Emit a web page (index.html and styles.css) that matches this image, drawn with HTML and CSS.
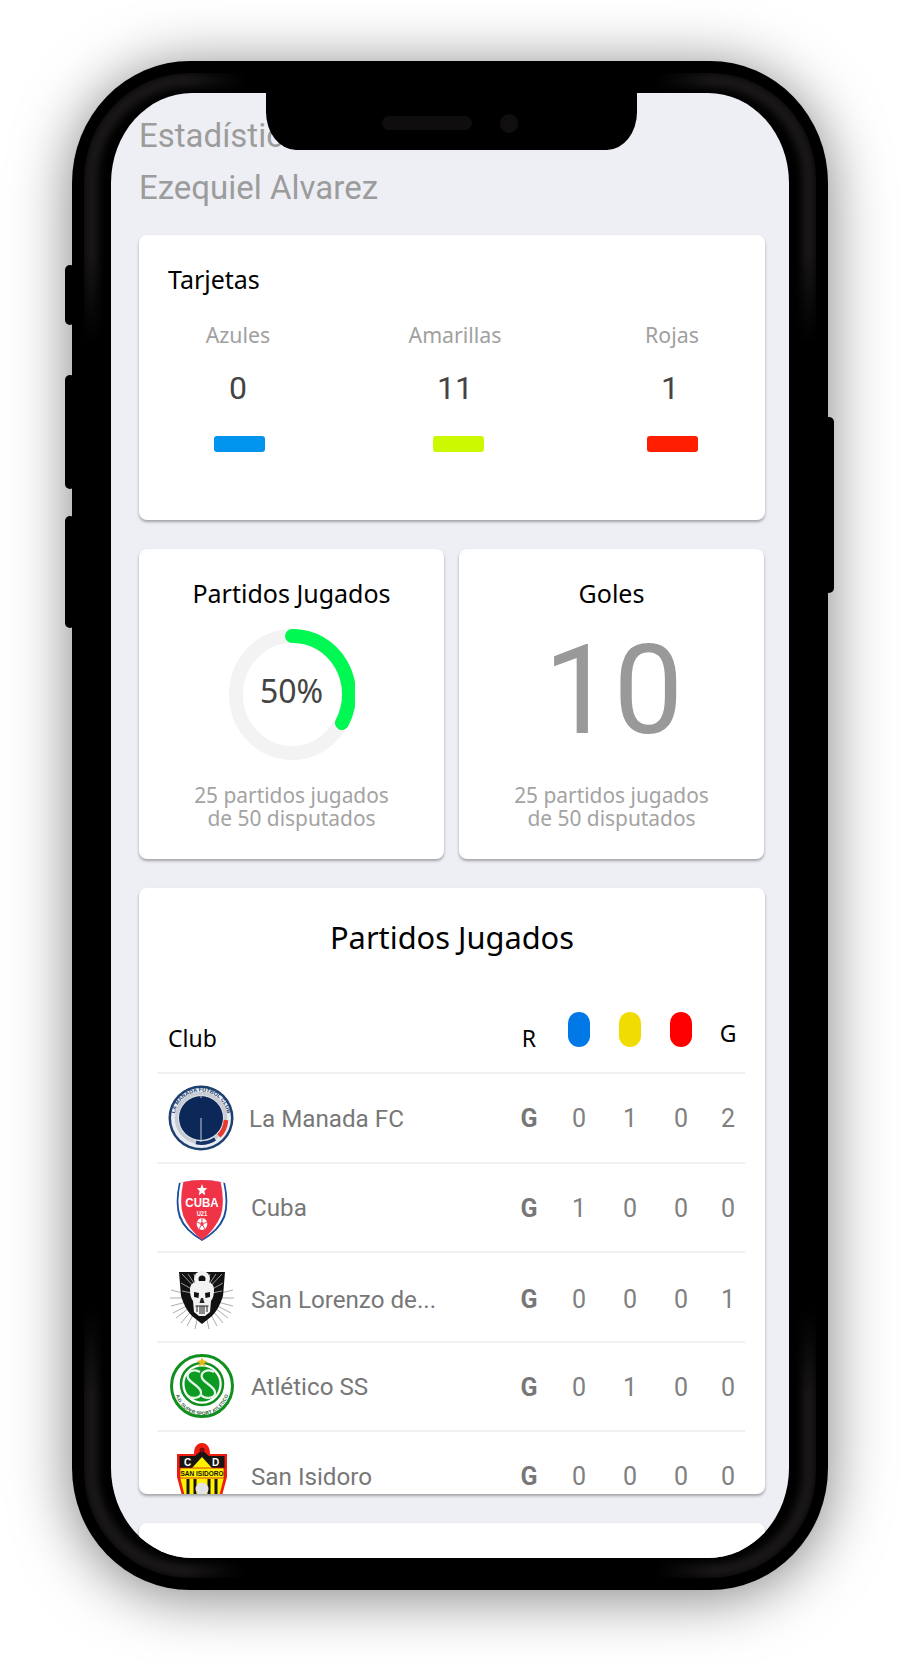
FILE: index.html
```html
<!DOCTYPE html>
<html lang="es">
<head>
<meta charset="utf-8">
<title>Estadísticas</title>
<link rel="stylesheet" href="styles.css">
</head>
<body>
<div class="phone">
  <span class="side-btn btn-a"></span>
  <span class="side-btn btn-b"></span>
  <span class="side-btn btn-c"></span>
  <span class="side-btn btn-d"></span>
  <div class="notch">
    <span class="speaker"></span>
    <span class="camera"></span>
  </div>
  <main class="screen">
    <header class="page-head">
      <h1 class="page-title">Estadísticas</h1>
      <h2 class="page-title">Ezequiel Alvarez</h2>
    </header>

    <section class="card cards-panel">
      <h3 class="card-title">Tarjetas</h3>
      <div class="tally">
        <div class="tally-col">
          <span class="tally-label">Azules</span>
          <span class="tally-num">0</span>
          <span class="chip chip-blue"></span>
        </div>
        <div class="tally-col">
          <span class="tally-label">Amarillas</span>
          <span class="tally-num">11</span>
          <span class="chip chip-yellow"></span>
        </div>
        <div class="tally-col">
          <span class="tally-label">Rojas</span>
          <span class="tally-num tally-num-last">1</span>
          <span class="chip chip-red"></span>
        </div>
      </div>
    </section>

    <div class="stat-row">
      <section class="card stat">
        <h3 class="card-title stat-title">Partidos Jugados</h3>
        <div class="stat-main">
          <svg class="ring" viewBox="0 0 126 131" aria-hidden="true">
            <ellipse cx="63" cy="65.5" rx="56" ry="58.5" fill="none" stroke="#f3f3f3" stroke-width="14"/>
            <path d="M63 7A56 58.5 0 0 1 113 94" fill="none" stroke="#00f852" stroke-width="14" stroke-linecap="round"/>
          </svg>
          <span class="ring-label">50%</span>
        </div>
        <p class="stat-note">25 partidos jugados<br>de 50 disputados</p>
      </section>
      <section class="card stat">
        <h3 class="card-title stat-title">Goles</h3>
        <div class="stat-main">
          <span class="big-num">10</span>
        </div>
        <p class="stat-note">25 partidos jugados<br>de 50 disputados</p>
      </section>
    </div>

    <section class="card matches">
      <h3 class="matches-title">Partidos Jugados</h3>
      <div class="mrow mhead">
        <span class="h-club">Club</span>
        <span class="h-r">R</span>
        <span class="pill pill-blue"></span>
        <span class="pill pill-yellow"></span>
        <span class="pill pill-red"></span>
        <span class="h-g">G</span>
      </div>

      <div class="mrow">
        <div class="club club-wide">
          <svg class="logo logo-wide" viewBox="0 0 66 66" aria-hidden="true">
            <circle cx="33" cy="33" r="32.5" fill="#1b3f6f"/>
            <circle cx="33" cy="33" r="30" fill="#e9edf3"/>
            <path id="mn" d="M6.500 33A26.500 26.500 0 0 1 59.500 33" fill="none"/>
            <text class="t-manada"><textPath href="#mn" startOffset="50%" text-anchor="middle">LA MANADA FUTBOL CLUB</textPath></text>
            <circle cx="33" cy="33" r="24.500" fill="none" stroke="#c9ccd2" stroke-width="3.500"/>
            <path d="M58 35A25 25 0 0 1 51 51" fill="none" stroke="#e8392f" stroke-width="4.500"/>
            <path d="M47 54A25 25 0 0 1 28 57.500" fill="none" stroke="#123268" stroke-width="3.500"/>
            <circle cx="33" cy="33" r="22" fill="#0c2859"/>
            <path d="M33 8V13M33 33V57" stroke="#c6ccd6" stroke-width="1"/>
          </svg>
          <span class="name">La Manada FC</span>
        </div>
        <b class="res">G</b><span class="val">0</span><span class="val">1</span><span class="val">0</span><span class="val last">2</span>
      </div>

      <div class="mrow">
        <div class="club">
          <svg class="logo logo-low" viewBox="-4 0 72 62" preserveAspectRatio="none" aria-hidden="true">
            <path d="M6 4Q32-2 58 4Q63 24 58 38Q52 52 32 62Q12 52 6 38Q1 24 6 4Z" fill="#1c4ea0"/>
            <path d="M8 3.500Q32-1 56 3.500Q61 24 56 37Q50 51 32 60Q14 51 8 37Q3 24 8 3.500Z" fill="#fff"/>
            <path d="M11 3Q32-1 53 3Q58 24 53 37Q47 50 32 61Q17 50 11 37Q6 24 11 3Z" fill="#f03347"/>
            <path d="M32 5l1.600 4 4.300.300-3.300 2.700 1.100 4.200-3.700-2.300-3.700 2.300 1.100-4.200-3.300-2.700 4.300-.300z" fill="#fff"/>
            <text class="t-cuba" x="32" y="28" text-anchor="middle">CUBA</text>
            <text class="t-u21" x="32" y="37" text-anchor="middle">U21</text>
            <circle cx="32" cy="45" r="6" fill="#fff"/>
            <circle cx="32" cy="45" r="2" fill="#f03347"/>
            <path d="M32 39V43M26.500 43l3.500 1.500M37.500 43l-3.500 1.500M28.500 50l2.500-3.500M35.500 50l-2.500-3.500" stroke="#f03347" stroke-width="1"/>
          </svg>
          <span class="name">Cuba</span>
        </div>
        <b class="res">G</b><span class="val">1</span><span class="val">0</span><span class="val">0</span><span class="val last">0</span>
      </div>

      <div class="mrow mrow-low">
        <div class="club">
          <svg class="logo logo-low" viewBox="0 0 64 62" aria-hidden="true">
            <g stroke="#8a8a8a" stroke-width=".7">
              <path d="M32 29L0 29M32 29L1 21M32 29L1 37M32 29L3 44M32 29L6 49M32 29L11 54M32 29L17 57M32 29L25 60M32 29L39 60M32 29L47 57M32 29L53 54M32 29L58 49M32 29L61 44M32 29L63 21M32 29L63 37M32 29L64 29"/>
            </g>
            <path d="M9 3H55L53 27Q49 40 42 47L32 55L22 47Q15 40 11 27Z" fill="#111"/>
            <path d="M32 26L12 5M32 26L18 5M32 26L24 5M32 26L40 5M32 26L46 5M32 26L52 5M32 26L11 14M32 26L53 14M32 26L12 22M32 26L52 22" stroke="#bbb" stroke-width=".8"/>
            <circle cx="32" cy="10" r="8" fill="#f2f2f2"/>
            <circle cx="32" cy="10" r="3.500" fill="#111"/>
            <path d="M20 20C20 14 26 12 32 12S44 14 44 20C44 26 43 29 41 32L40 43L35 47H29L24 43L23 32C21 29 20 26 20 20Z" fill="#f2f2f2"/>
            <path d="M24 23L29 24L28.500 29L24 28ZM40 23L35 24L35.500 29L40 28Z" fill="#111"/>
            <path d="M31 29L29.500 34H34.500L33 29Z" fill="#222"/>
            <path d="M27 37V43M30 37V45M32 37V45M34 37V45M37 37V43M25.500 37H38.500" stroke="#222" stroke-width="1"/>
          </svg>
          <span class="name">San Lorenzo de...</span>
        </div>
        <b class="res">G</b><span class="val">0</span><span class="val">0</span><span class="val">0</span><span class="val last">1</span>
      </div>

      <div class="mrow">
        <div class="club">
          <svg class="logo logo-round" viewBox="0 0 64 64" aria-hidden="true">
            <circle cx="32" cy="32" r="30.500" fill="#fff" stroke="#0f8f1e" stroke-width="3"/>
            <path id="at" d="M5 34A27 27 0 0 0 59 34" fill="none"/>
            <text class="t-atl"><textPath href="#at" startOffset="50%" text-anchor="middle">A.D. SUPER SPORT ATLETICO</textPath></text>
            <circle cx="32" cy="30" r="21" fill="#fff" stroke="#0f8f1e" stroke-width="2.500"/>
            <circle cx="32" cy="30" r="17.500" fill="#0c9a22"/>
            <path d="M30 18C24 14 16 18 18 24C20 29 30 32 31 38C32 44 22 46 17 41" fill="none" stroke="#e3f5e5" stroke-width="2.200"/>
            <path d="M44 18C38 14 30 18 32 24C34 29 44 32 45 38C46 44 36 46 31 41" fill="none" stroke="#e3f5e5" stroke-width="2.200"/>
            <path d="M32 3l1.500 3.500 3.700.300-2.800 2.400.900 3.600-3.300-2-3.300 2 .900-3.600-2.800-2.400 3.700-.300z" fill="#e9b81e"/>
          </svg>
          <span class="name">Atlético SS</span>
        </div>
        <b class="res">G</b><span class="val">0</span><span class="val">1</span><span class="val">0</span><span class="val last">0</span>
      </div>

      <div class="mrow">
        <div class="club">
          <svg class="logo logo-tall" viewBox="0 0 64 66" aria-hidden="true">
            <path d="M7 11H24C24 4 27 0 32 0S40 4 40 11H57V34L50 60L32 66L14 60L7 34Z" fill="#f01c10"/>
            <path d="M9.500 13H25L32 7L39 13H54.500V25H9.500Z" fill="#191514"/>
            <circle cx="32" cy="7" r="2.500" fill="#7a0d08"/>
            <path d="M10 25H22L32 14L42 25H54V34L48 58L32 64L16 58L10 34Z" fill="#fff200"/>
            <rect x="10" y="25" width="44" height="10" fill="#fff200" stroke="#c81a10" stroke-width=".8"/>
            <text class="t-cd" x="14" y="23">C</text>
            <text class="t-cd" x="42" y="23">D</text>
            <text class="t-si" x="32" y="33" text-anchor="middle">SAN ISIDORO</text>
            <path d="M18 36V58M25 36V62M39 36V62M46 36V58" stroke="#161311" stroke-width="3"/>
            <circle cx="32" cy="46" r="6.500" fill="#e4e4e4"/>
          </svg>
          <span class="name">San Isidoro</span>
        </div>
        <b class="res">G</b><span class="val">0</span><span class="val">0</span><span class="val">0</span><span class="val last">0</span>
      </div>
    </section>

    <section class="card next-card"></section>
  </main>
</div>
</body>
</html>
```

FILE: styles.css
```css
* { box-sizing: border-box; }

html, body {
  margin: 0;
  height: 1665px;
  overflow: hidden;
  background: #fff;
}

body {
  padding: 61px 72px 0;
  font-family: "Roboto", "Liberation Sans", sans-serif;
}

.phone {
  position: relative;
  width: 756px;
  height: 1529px;
  padding: 32px 39px 32px;
  background: #000;
  border-radius: 118px / 122px;
  box-shadow: 0 6px 60px rgba(0, 0, 0, .5);
}

.phone::before {
  content: "";
  position: absolute;
  inset: 12px;
  border: 14px solid #1b1819;
  border-radius: 106px;
  filter: blur(4px);
  -webkit-mask-image: linear-gradient(to bottom, #000 0 12%, transparent 18% 82%, #000 88%), linear-gradient(to right, #000 0 14%, transparent 22% 78%, #000 86%);
  -webkit-mask-composite: source-in;
  mask-image: linear-gradient(to bottom, #000 0 12%, transparent 18% 82%, #000 88%), linear-gradient(to right, #000 0 14%, transparent 22% 78%, #000 86%);
  mask-composite: intersect;
}

.side-btn {
  position: absolute;
  width: 10px;
  background: #000;
  border-radius: 5px;
}
.btn-a { left: -7px; top: 204px; height: 60px; }
.btn-b { left: -7px; top: 314px; height: 114px; }
.btn-c { left: -7px; top: 455px; height: 112px; }
.btn-d { right: -6px; top: 356px; height: 176px; }

.notch {
  position: absolute;
  z-index: 3;
  left: 194px;
  top: 30px;
  width: 371px;
  height: 59px;
  background: #000;
  border-radius: 0 0 30px 30px / 0 0 38px 38px;
}
.speaker {
  position: absolute;
  left: 116px;
  top: 25px;
  width: 90px;
  height: 14px;
  border-radius: 7px;
  background: #0f0d0e;
}
.camera {
  position: absolute;
  left: 234px;
  top: 23px;
  width: 18px;
  height: 19px;
  border-radius: 50%;
  background: #100e0f;
}

.screen {
  position: relative;
  height: 1465px;
  padding: 17px 24px 0 28px;
  background: #eeeff4;
  border-radius: 81px / 90px;
  overflow: hidden;
}

.page-head { margin-bottom: 21px; }

.page-title {
  margin: 0;
  font-size: 33px;
  line-height: 52px;
  font-weight: 400;
  color: #9c9c9c;
  white-space: nowrap;
}

.card {
  background: #fff;
  border-radius: 8px;
  box-shadow: 0 2px 3px rgba(0, 0, 0, .32);
}

.card-title {
  margin: 0;
  font-family: "Noto Sans", sans-serif;
  font-size: 25px;
  line-height: 34px;
  font-weight: 400;
  color: #000;
}

.cards-panel {
  height: 285px;
  padding: 27px 0 0 29px;
}

.tally {
  display: flex;
  justify-content: space-between;
  margin-top: 24px;
  padding: 0 43px 0 20px;
}
.tally-col {
  display: flex;
  flex-direction: column;
  align-items: center;
  width: 100px;
}
.tally-label {
  font-family: "Noto Sans", sans-serif;
  font-size: 21.300px;
  line-height: 30px;
  color: #a0a0a0;
}
.tally-num {
  margin-top: 18px;
  font-size: 32px;
  line-height: 40px;
  color: #444;
}
.tally-num-last { margin-right: 4px; }
.chip {
  width: 51px;
  height: 16px;
  margin-top: 28px;
  border-radius: 3px;
}
.chip-blue { margin-left: 3px; background: #0094ee; }
.chip-yellow { margin-left: 7px; background: #ccf900; }
.chip-red { background: #ff1e00; }

.stat-row {
  display: grid;
  grid-template-columns: 305px 305px;
  gap: 15px;
  margin-top: 29px;
}
.stat {
  height: 310px;
  padding-top: 26px;
  text-align: center;
}
.stat-title { line-height: 36px; }
.stat-main {
  position: relative;
  display: flex;
  justify-content: center;
  align-items: center;
  height: 131px;
  margin-top: 18px;
}
.ring {
  width: 126px;
  height: 131px;
}
.ring-label {
  position: absolute;
  left: 0;
  right: 0;
  top: 45px;
  font-family: "Noto Sans", sans-serif;
  font-size: 32px;
  line-height: 34px;
  color: #444;
}
.big-num {
  font-size: 124px;
  line-height: 131px;
  color: #999;
  transform: translate(2px, -4px);
}
.stat-note {
  margin: 24px 0 0;
  font-family: "Noto Sans", sans-serif;
  font-size: 20.900px;
  line-height: 23px;
  color: #a3a3a3;
}

.matches {
  height: 606px;
  margin-top: 29px;
  overflow: hidden;
}
.matches-title {
  margin: 0;
  padding-top: 28px;
  font-family: "Noto Sans", sans-serif;
  font-size: 30.800px;
  line-height: 42px;
  font-weight: 400;
  text-align: center;
  color: #000;
}

.mrow {
  display: grid;
  grid-template-columns: 347px 50px 50px 52px 50px 39px;
  align-items: center;
  height: 89.500px;
  margin: 0 20px 0 18px;
  border-bottom: 2px solid #f0f0f0;
  text-align: center;
}
.mhead {
  align-items: start;
  height: 72px;
  margin-top: 44px;
  font-family: "Noto Sans", sans-serif;
  font-size: 23px;
  line-height: 24px;
  color: #000;
}
.h-club { margin: 24px 0 0 11px; text-align: left; }
.h-r { margin-top: 24px; }
.h-g { margin: 19px 0 0 5px; }
.pill {
  justify-self: center;
  width: 22px;
  height: 35px;
  margin-top: 10px;
  border-radius: 11px;
}
.pill-blue { background: #0078e6; }
.pill-yellow { background: #f0dc00; }
.pill-red { background: #ff0000; }

.club {
  display: flex;
  align-items: center;
  gap: 17px;
  min-width: 0;
  margin-left: 13px;
  text-align: left;
}
.club-wide {
  gap: 15px;
  margin-left: 11px;
}
.logo {
  flex: none;
  width: 64px;
  height: 62px;
}
.logo-low { margin-top: 6px; }
.logo-round { height: 64px; }
.logo-wide { width: 66px; height: 66px; }
.logo-tall { height: 66px; }

.name {
  margin-top: 2px;
  font-size: 24.200px;
  line-height: 30px;
  color: #777;
  white-space: nowrap;
}
.res {
  margin-top: 2px;
  font-size: 25px;
  font-weight: 700;
  color: #777;
}
.val {
  margin-top: 2px;
  font-size: 25px;
  color: #808080;
}
.val.last { padding-left: 5px; }
.mrow-low .name,
.mrow-low .res,
.mrow-low .val { margin-top: 6px; }

.next-card {
  height: 80px;
  margin-top: 29px;
}

.t-manada { font: 700 5.500px "Liberation Sans", sans-serif; fill: #1b3f6f; }
.t-cuba { font: 700 13px "Liberation Sans", sans-serif; fill: #fff; }
.t-u21 { font: 700 6.500px "Liberation Sans", sans-serif; fill: #fff; }
.t-atl { font: 700 4.800px "Liberation Sans", sans-serif; fill: #2c5a33; }
.t-cd { font: 700 10px "Liberation Sans", sans-serif; fill: #fff; }
.t-si { font: 700 6.500px "Liberation Sans", sans-serif; fill: #111; }
```
